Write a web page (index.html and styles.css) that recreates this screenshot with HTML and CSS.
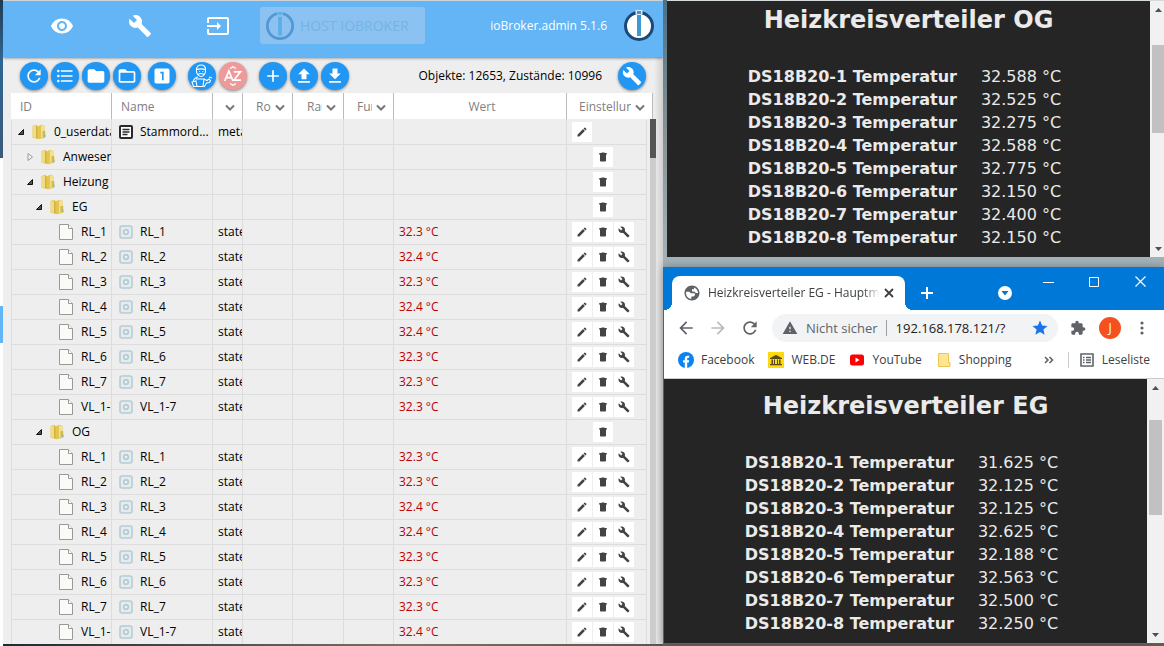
FILE: index.html
```html
<!DOCTYPE html>
<html lang="de">
<head>
<meta charset="utf-8">
<title>ioBroker.admin</title>
<link rel="stylesheet" href="styles.css">
</head>
<body>
<svg class="defs" aria-hidden="true">
  <symbol id="i-eye" viewBox="0 0 24 24"><path d="M12 4.5C7 4.5 2.73 7.61 1 12c1.73 4.39 6 7.5 11 7.5s9.27-3.11 11-7.5c-1.73-4.39-6-7.5-11-7.5zM12 17c-2.76 0-5-2.24-5-5s2.24-5 5-5 5 2.24 5 5-2.24 5-5 5zm0-8c-1.66 0-3 1.34-3 3s1.34 3 3 3 3-1.34 3-3-1.34-3-3-3z"/></symbol>
  <symbol id="i-wrench" viewBox="0 0 24 24"><path d="M22.7 19l-9.1-9.1c.9-2.3.4-5-1.5-6.9-2-2-5-2.4-7.4-1.3L9 6 6 9 1.6 4.7C.4 7.1.9 10.1 2.9 12.1c1.9 1.9 4.6 2.4 6.9 1.5l9.1 9.1c.4.4 1 .4 1.4 0l2.3-2.3c.5-.4.5-1.1.1-1.4z"/></symbol>
  <symbol id="i-input" viewBox="0 0 24 24"><path d="M21 3.01H3c-1.1 0-2 .9-2 2V9h2V4.99h18v14.03H3V15H1v4.01c0 1.1.9 1.98 2 1.98h18c1.1 0 2-.88 2-1.98v-14c0-1.11-.9-2-2-2zM11 16l4-4-4-4v3H1v2h10v3z"/></symbol>
  <symbol id="i-refresh" viewBox="0 0 24 24"><path d="M17.65 6.35C16.2 4.9 14.21 4 12 4c-4.42 0-7.99 3.58-7.99 8s3.57 8 7.99 8c3.73 0 6.84-2.55 7.73-6h-2.08c-.82 2.33-3.04 4-5.65 4-3.31 0-6-2.69-6-6s2.69-6 6-6c1.66 0 3.14.69 4.22 1.78L13 11h7V4l-2.35 2.35z"/></symbol>
  <symbol id="i-list" viewBox="0 0 24 24"><circle cx="4" cy="6" r="1.5"/><circle cx="4" cy="12" r="1.5"/><circle cx="4" cy="18" r="1.5"/><path d="M7 5h14v2H7zM7 11h14v2H7zM7 17h14v2H7z"/></symbol>
  <symbol id="i-folder" viewBox="0 0 24 24"><path d="M10 4H4c-1.1 0-1.99.9-1.99 2L2 18c0 1.1.9 2 2 2h16c1.1 0 2-.9 2-2V8c0-1.1-.9-2-2-2h-8l-2-2z"/></symbol>
  <symbol id="i-folder-open" viewBox="0 0 24 24"><path d="M20 6h-8l-2-2H4c-1.1 0-1.99.9-1.99 2L2 18c0 1.1.9 2 2 2h16c1.1 0 2-.9 2-2V8c0-1.1-.9-2-2-2zm0 12H4V8h16v10z"/></symbol>
  <symbol id="i-one" viewBox="0 0 24 24"><path d="M19 3H5c-1.1 0-2 .9-2 2v14c0 1.1.9 2 2 2h14c1.1 0 2-.9 2-2V5c0-1.1-.9-2-2-2zm-5 14h-2V9h-2V7h4v10z"/></symbol>
  <symbol id="i-expert" viewBox="0 0 24 24"><g fill="none" stroke="#fff" stroke-width="1.1"><path d="M6.500 5.500c0-3 2-4.500 4.500-4.500s4.500 1.500 4.500 4.500c-3-.8-6-.8-9 0zM6.500 5.500c-.5 3.500 1.500 7 4.500 7s5-3.500 4.500-7M8 10.500c2-1.300 4-1.300 6 0M9 7.500h.8M12.500 7.500h.8"/><path d="M8 13c-3 .8-4.500 2-5 5M2 18l4-1 1 5.500H3.500zM6 15h8l-1 7.500H7.500M14 15l3 1.500 2-1.500 1.500 1.500-1 2-3 .5-2.500 4M19 13l3 1"/></g></symbol>
  <symbol id="i-sort" viewBox="0 0 24 24"><g fill="none" stroke="#fff" stroke-width="2"><path d="M2 18L7 6l5 12M4 14h6M13 7h8l-8 10h8.500"/><path stroke-width="1.500" d="M8.500 3L12 .8 15.500 3M8.500 21l3.500 2.200 3.500-2.200"/></g></symbol>
  <symbol id="i-plus" viewBox="0 0 24 24"><path d="M19 13h-6v6h-2v-6H5v-2h6V5h2v6h6v2z"/></symbol>
  <symbol id="i-up" viewBox="0 0 24 24"><path d="M9 16h6v-6h4l-7-7-7 7h4zm-4 2h14v2H5z"/></symbol>
  <symbol id="i-down" viewBox="0 0 24 24"><path d="M19 9h-4V3H9v6H5l7 7 7-7zM5 18v2h14v-2H5z"/></symbol>
  <symbol id="i-edit" viewBox="0 0 24 24"><path d="M3 17.250V21h3.750L17.810 9.940l-3.750-3.750L3 17.250zM20.710 7.040c.39-.39.39-1.020 0-1.410l-2.340-2.340c-.39-.39-1.020-.39-1.410 0l-1.830 1.830 3.750 3.750 1.830-1.830z"/></symbol>
  <symbol id="i-trash" viewBox="0 0 24 24"><path d="M6 19c0 1.1.9 2 2 2h8c1.1 0 2-.9 2-2V7H6v12zM19 4h-3.500l-1-1h-5l-1 1H5v2h14V4z"/><path d="M5 4h14v4H5z"/></symbol>
  <symbol id="i-chevron" viewBox="0 0 10 7"><path d="M1 1.500l4 4 4-4" fill="none" stroke="#777" stroke-width="2"/></symbol>
  <symbol id="i-open" viewBox="0 0 8 8"><path d="M6.500 1.500v5h-5z" fill="#555" stroke="#111"/></symbol>
  <symbol id="i-closed" viewBox="0 0 8 8"><path d="M2 0.500L6.500 4 2 7.500z" fill="#f6f6f6" stroke="#999"/></symbol>
  <symbol id="i-yfolder" viewBox="0 0 14 16"><path d="M.5 2L4 .8 6 2.200 9 .8l3.500 1v5l.8.5v6.500l-3.300.7-3 .8-6.500-1.500z" fill="#e6c955"/><path d="M.8 2.500L4 1.500V14l-3.200-.8z" fill="#f0dc82"/><path d="M4 1.500L5.500 3v11.500L4 14z" fill="#d4b040"/><path d="M6 3l3-1.800v12L6 15z" fill="#e3c554"/><path d="M9 1.500h3v12H9z" fill="#f3e18d"/><path d="M10.500 7h2.500v6.500h-2.500z" fill="#dcb841"/><path d="M12.300 10.500h1.200v2.500h-1.200z" fill="#62c6df"/></symbol>
  <symbol id="i-file" viewBox="0 0 14 16"><path d="M.5.5h9l4 4v11H.5z" fill="#fafaf6" stroke="#999"/><path d="M9.500.5v4h4" fill="#fff" stroke="#999"/></symbol>
  <symbol id="i-meta" viewBox="0 0 14 14"><rect x="1" y="1" width="12" height="12" rx="1" fill="#fff" stroke="#2a2a2a" stroke-width="2"/><path d="M3.500 4.500h7M3.500 7h7M3.500 9.500h5" stroke="#2a2a2a" stroke-width="1.400"/></symbol>
  <symbol id="i-state" viewBox="0 0 14 14"><rect x="1" y="1" width="12" height="12" rx="2" fill="#e2ebee" stroke="#b8ccd3" stroke-width="1.600"/><circle cx="7" cy="7" r="2.300" fill="#e8f0f2" stroke="#b0c6ce" stroke-width="1.500"/></symbol>
  <symbol id="i-logo" viewBox="0 0 32 32"><circle cx="16" cy="16" r="13.500" fill="#fff" stroke="#1b4877" stroke-width="3"/><path d="M12.500 0h7v4h-7z" fill="#d6ecf8"/><path d="M14 5h4v21h-4zM14 1h4v3h-4z" fill="#3b9bd0"/></symbol>
  <symbol id="i-logo-dim" viewBox="0 0 32 32"><circle cx="16" cy="16" r="13.500" fill="none" stroke="#5398d4" stroke-width="3"/><path d="M13 1h6v3h-6z" fill="#8bc2f1"/><path d="M14 6h4v20h-4zM14 1h4v3h-4z" fill="#5daee6"/></symbol>
  <symbol id="i-back" viewBox="0 0 24 24"><path d="M20 11H7.830l5.590-5.590L12 4l-8 8 8 8 1.410-1.410L7.830 13H20v-2z"/></symbol>
  <symbol id="i-forward" viewBox="0 0 24 24"><path d="M4 11h12.170l-5.590-5.590L12 4l8 8-8 8-1.410-1.410L16.170 13H4v-2z"/></symbol>
  <symbol id="i-warning" viewBox="0 0 24 24"><path d="M1 21h22L12 2 1 21zm12-3h-2v-2h2v2zm0-4h-2v-4h2v4z"/></symbol>
  <symbol id="i-globe" viewBox="0 0 24 24"><path d="M12 2C6.480 2 2 6.480 2 12s4.480 10 10 10 10-4.480 10-10S17.520 2 12 2zm-1 17.930c-3.950-.49-7-3.850-7-7.930 0-.62.08-1.210.21-1.790H8.500l2 2h4c1 0 1.500.8 1.500 1.700 0 1-.8 1.800-1.500 2.300L11 17v2.930zM20 12h-3l-2-2h-3V7h2.500L15 4.590c2.930 1.190 5 4.060 5 7.410z"/></symbol>
  <symbol id="i-star" viewBox="0 0 24 24"><path d="M12 17.270L18.180 21l-1.640-7.030L22 9.240l-7.190-.61L12 2 9.190 8.630 2 9.240l5.460 4.730L5.820 21z"/></symbol>
  <symbol id="i-puzzle" viewBox="0 0 24 24"><path d="M20.500 11H19V7c0-1.100-.9-2-2-2h-4V3.500C13 2.120 11.880 1 10.500 1S8 2.120 8 3.500V5H4c-1.100 0-1.990.9-1.990 2v3.800H3.500c1.490 0 2.700 1.210 2.700 2.700s-1.210 2.700-2.700 2.700H2V20c0 1.100.9 2 2 2h3.800v-1.500c0-1.490 1.210-2.700 2.700-2.700 1.490 0 2.700 1.210 2.700 2.700V22H17c1.100 0 2-.9 2-2v-4h1.500c1.380 0 2.500-1.120 2.500-2.500S21.880 11 20.500 11z"/></symbol>
  <symbol id="i-arrow-up" viewBox="0 0 7 4"><path d="M0 4l3.500-4L7 4z"/></symbol>
  <symbol id="i-arrow-down" viewBox="0 0 7 4"><path d="M0 0l3.500 4L7 0z"/></symbol>
</svg>
<div class="desktop">
  <div class="behind"><span class="behind-mark"></span></div>

  <main class="admin">
    <header class="appbar">
      <nav class="appbar-nav">
        <button class="nav-btn" aria-label="Ansicht"><svg class="ic24"><use href="#i-eye"/></svg></button>
        <button class="nav-btn" aria-label="Einstellungen"><svg class="ic24"><use href="#i-wrench"/></svg></button>
        <button class="nav-btn" aria-label="Anmelden"><svg class="ic24"><use href="#i-input"/></svg></button>
      </nav>
      <button class="host" disabled><svg class="ic30"><use href="#i-logo-dim"/></svg>HOST IOBROKER</button>
      <span class="version">ioBroker.admin 5.1.6</span>
      <svg class="ic32"><use href="#i-logo"/></svg>
    </header>
    <div class="toolbar">
      <div class="group">
        <button class="fab" aria-label="Aktualisieren"><svg class="ic20"><use href="#i-refresh"/></svg></button>
        <button class="fab" aria-label="Liste"><svg class="ic20"><use href="#i-list"/></svg></button>
        <button class="fab" aria-label="Alle schließen"><svg class="ic20"><use href="#i-folder"/></svg></button>
        <button class="fab" aria-label="Alle öffnen"><svg class="ic20"><use href="#i-folder-open"/></svg></button>
      </div>
      <button class="fab one" aria-label="Eine Ebene"><svg class="ic20"><use href="#i-one"/></svg></button>
      <div class="group">
        <button class="fab" aria-label="Expertenmodus"><svg class="ic24"><use href="#i-expert"/></svg></button>
        <button class="fab fab-red" aria-label="Sortieren"><svg class="ic20"><use href="#i-sort"/></svg></button>
      </div>
      <div class="group">
        <button class="fab" aria-label="Hinzufügen"><svg class="ic20"><use href="#i-plus"/></svg></button>
        <button class="fab" aria-label="Hochladen"><svg class="ic20"><use href="#i-up"/></svg></button>
        <button class="fab" aria-label="Herunterladen"><svg class="ic20"><use href="#i-down"/></svg></button>
      </div>
      <span class="count">Objekte: 12653, Zustände: 10996</span>
      <button class="fab" aria-label="Spalten"><svg class="ic20"><use href="#i-wrench"/></svg></button>
    </div>
    <div class="tree">
      <table class="objects">
        <colgroup><col class="c-id"><col class="c-name"><col class="c-type"><col class="c-role"><col class="c-room"><col class="c-func"><col><col class="c-set"><col class="c-end"></colgroup>
        <thead>
          <tr>
            <th class="first">ID</th>
            <th>Name</th>
            <th><label class="filter"><select class="w-none" aria-label="Typ"><option></option></select><svg class="chev"><use href="#i-chevron"/></svg></label></th>
            <th><label class="filter"><select class="w-two" aria-label="Rolle"><option>Rolle</option></select><svg class="chev"><use href="#i-chevron"/></svg></label></th>
            <th><label class="filter"><select class="w-two" aria-label="Raum"><option>Raum</option></select><svg class="chev"><use href="#i-chevron"/></svg></label></th>
            <th><label class="filter"><select class="w-two" aria-label="Funktionen"><option>Funktionen</option></select><svg class="chev"><use href="#i-chevron"/></svg></label></th>
            <th class="center">Wert</th>
            <th colspan="2"><label class="filter"><select class="w-long" aria-label="Einstellungen"><option>Einstellungen</option></select><svg class="chev"><use href="#i-chevron"/></svg></label></th>
          </tr>
        </thead>
        <tbody id="rows"></tbody>
      </table>
      <div class="tree-scroll"><span class="tree-thumb"></span></div>
    </div>
  </main>

  <div class="right">
    <section class="sensor-window">
      <div class="sensors">
        <h1>Heizkreisverteiler OG</h1>
        <table class="temps">
          <tr><th>DS18B20-1 Temperatur</th><td>32.588 °C</td></tr>
          <tr><th>DS18B20-2 Temperatur</th><td>32.525 °C</td></tr>
          <tr><th>DS18B20-3 Temperatur</th><td>32.275 °C</td></tr>
          <tr><th>DS18B20-4 Temperatur</th><td>32.588 °C</td></tr>
          <tr><th>DS18B20-5 Temperatur</th><td>32.775 °C</td></tr>
          <tr><th>DS18B20-6 Temperatur</th><td>32.150 °C</td></tr>
          <tr><th>DS18B20-7 Temperatur</th><td>32.400 °C</td></tr>
          <tr><th>DS18B20-8 Temperatur</th><td>32.150 °C</td></tr>
        </table>
      </div>
      <div class="scroll scroll-og"><svg class="arrow"><use href="#i-arrow-up"/></svg><span class="thumb"></span><svg class="arrow"><use href="#i-arrow-down"/></svg></div>
    </section>

    <section class="browser">
      <div class="tabstrip">
        <div class="tab">
          <svg class="ic18 grey"><use href="#i-globe"/></svg>
          <span class="tab-title">Heizkreisverteiler EG - Hauptmenü</span>
          <button class="plain" aria-label="Tab schließen"><svg class="ic10" viewBox="0 0 10 10"><path d="M1 1l8 8M9 1L1 9" stroke="#3c4043" stroke-width="1.800"/></svg></button>
        </div>
        <button class="plain new-tab" aria-label="Neuer Tab"><svg class="ic12" viewBox="0 0 12 12"><path d="M6 0v12M0 6h12" stroke="#fff" stroke-width="2"/></svg></button>
        <button class="plain search-tabs" aria-label="Tabs suchen"><svg class="ic14" viewBox="0 0 14 14"><circle cx="7" cy="7" r="7" fill="#fff"/><path d="M3.500 5h7L7 9.500z" fill="#0078d7"/></svg></button>
        <div class="win-btns">
          <button class="plain" aria-label="Minimieren"><svg class="ic11" viewBox="0 0 11 11"><path d="M0 6.500h11" stroke="#fff"/></svg></button>
          <button class="plain" aria-label="Maximieren"><svg class="ic11" viewBox="0 0 11 11"><path d="M.5 1.500h9v9h-9z" fill="none" stroke="#fff"/></svg></button>
          <button class="plain" aria-label="Schließen"><svg class="ic11" viewBox="0 0 11 11"><path d="M.5.5l10 10M10.500.5l-10 10" stroke="#fff" stroke-width="1.200"/></svg></button>
        </div>
      </div>
      <div class="navbar">
        <button class="plain grey" aria-label="Zurück"><svg class="ic20"><use href="#i-back"/></svg></button>
        <button class="plain light" aria-label="Vorwärts" disabled><svg class="ic20"><use href="#i-forward"/></svg></button>
        <button class="plain grey" aria-label="Neu laden"><svg class="ic20"><use href="#i-refresh"/></svg></button>
        <div class="omnibox">
          <svg class="ic16 grey"><use href="#i-warning"/></svg>
          <span class="insecure">Nicht sicher</span>
          <input class="url" aria-label="Adresse" value="192.168.178.121/?">
          <button class="plain blue" aria-label="Lesezeichen"><svg class="ic18"><use href="#i-star"/></svg></button>
        </div>
        <button class="plain grey" aria-label="Erweiterungen"><svg class="ic16"><use href="#i-puzzle"/></svg></button>
        <button class="plain avatar">J</button>
        <button class="plain grey" aria-label="Menü"><svg class="dots" viewBox="0 0 4 14"><circle cx="2" cy="2" r="1.600"/><circle cx="2" cy="7" r="1.600"/><circle cx="2" cy="12" r="1.600"/></svg></button>
      </div>
      <div class="bookmarks">
        <a href="#" class="bm"><svg class="ic16" viewBox="0 0 16 16"><circle cx="8" cy="8" r="8" fill="#0a84f0"/><path d="M6.800 16v-5.500H5V8.200h1.800V6.700c0-2 1-3 2.900-3l1.500.1v2h-1c-.8 0-1 .4-1 1.100v1.300h2l-.4 2.300H9.200V16z" fill="#fff"/></svg>Facebook</a>
        <a href="#" class="bm"><svg class="ic16" viewBox="0 0 16 16"><path d="M0 0h16v16H0z" fill="#ffd90f"/><path d="M2 6c2-.5 3-2 6-3 3 1 4 2.500 6 3v1H2zM3.500 7.500H5V12H3.500zM6 7.500h1V12H6zM9 7.500h1V12H9zM11 7.500h1.500V12H11zM2 12h12v1.300H2z" fill="#5a4b1a"/></svg>WEB.DE</a>
        <a href="#" class="bm"><svg class="ic16" viewBox="0 0 16 16"><rect x="1" y="2.500" width="14" height="11" rx="2.500" fill="#f00"/><path d="M6.500 5.500v5l4-2.500z" fill="#fff"/></svg>YouTube</a>
        <a href="#" class="bm"><svg class="ic16" viewBox="0 0 16 16"><path d="M2.500 1.500h10v9h1.500v4H2.500z" fill="#ffe694" stroke="#edc653"/></svg>Shopping</a>
        <button class="plain more" aria-label="Weitere"><svg class="ic10" viewBox="0 0 10 10"><path d="M1 2L4 5 1 8M5.500 2l3 3-3 3" fill="none" stroke="#5f6368" stroke-width="1.600"/></svg></button>
        <button class="plain reading"><svg class="ic14" viewBox="0 0 14 14"><path d="M1 1h12v12H1z" fill="#fff" stroke="#5f6368" stroke-width="1.600"/><path d="M3 4.500h1.500M6 4.500h5M3 7h1.500M6 7h5M3 9.500h1.500M6 9.500h5" stroke="#5f6368" stroke-width="1.400"/></svg>Leseliste</button>
      </div>
      <div class="page">
        <div class="sensors">
          <h1>Heizkreisverteiler EG</h1>
          <table class="temps">
            <tr><th>DS18B20-1 Temperatur</th><td>31.625 °C</td></tr>
            <tr><th>DS18B20-2 Temperatur</th><td>32.125 °C</td></tr>
            <tr><th>DS18B20-3 Temperatur</th><td>32.125 °C</td></tr>
            <tr><th>DS18B20-4 Temperatur</th><td>32.625 °C</td></tr>
            <tr><th>DS18B20-5 Temperatur</th><td>32.188 °C</td></tr>
            <tr><th>DS18B20-6 Temperatur</th><td>32.563 °C</td></tr>
            <tr><th>DS18B20-7 Temperatur</th><td>32.500 °C</td></tr>
            <tr><th>DS18B20-8 Temperatur</th><td>32.250 °C</td></tr>
          </table>
        </div>
        <div class="scroll scroll-eg"><svg class="arrow"><use href="#i-arrow-up"/></svg><span class="thumb"></span><svg class="arrow"><use href="#i-arrow-down"/></svg></div>
      </div>
    </section>
  </div>
</div>
<script src="rows.js"></script>
</body>
</html>
```

FILE: styles.css
```css
* { box-sizing: border-box; }
body { margin: 0; font: 12px/16px "Open Sans", "Noto Sans", sans-serif; color: #000; }
button, select, input { font: inherit; color: inherit; border: 0; padding: 0; margin: 0; background: none; }
svg { display: block; fill: currentColor; flex: none; }
.defs { position: absolute; width: 0; height: 0; }
.ic10 { width: 10px; height: 10px; }
.ic11 { width: 11px; height: 11px; }
.ic12 { width: 12px; height: 12px; }
.ic14 { width: 14px; height: 14px; }
.ic16 { width: 16px; height: 16px; }
.ic18 { width: 18px; height: 18px; }
.ic20 { width: 20px; height: 20px; }
.ic24 { width: 24px; height: 24px; }
.ic30 { width: 30px; height: 30px; }
.ic32 { width: 32px; height: 32px; }
.grey { color: #5f6368; }
.light { color: #b9bbbe; }
.blue { color: #1a73e8; }

.desktop {
  display: grid;
  grid-template-columns: 3px 660fr 501fr;
  height: 100vh;
  overflow: hidden;
  background: linear-gradient(90deg, #1c2a33, #7b7263 35%, #55524c 60%, #8d8a80);
}
.behind { background: linear-gradient(#1f3d55, #2f6594 60px, #3c5a78 158px, #fff 158px); padding-top: 306px; }
.behind-mark { display: block; height: 37px; background: #64b5f6; }

/* object browser */
.admin {
  display: flex;
  flex-direction: column;
  min-width: 0;
  overflow: hidden;
  margin-bottom: 2px;
  border-top: 1px solid #cfd4d8;
  background: linear-gradient(270deg, #cfcfcf, #eee 9px);
}
.appbar {
  display: flex;
  align-items: center;
  padding: 6px 8px 13px 47px;
  background: #64b5f6;
  color: #fff;
  box-shadow: 0 1px 3px rgba(0, 0, 0, .5);
}
.appbar-nav { display: flex; gap: 54px; }
.nav-btn { color: #fff; }
.host {
  display: flex;
  align-items: center;
  gap: 5px;
  height: 37px;
  margin-left: 30px;
  padding: 0 16px 0 5px;
  border-radius: 3px;
  background: #8bc2f1;
  color: #77b3e6;
  font-size: 14px;
}
.version { margin-left: auto; padding-right: 16px; white-space: nowrap; }
.toolbar { display: flex; align-items: center; gap: 12px; padding: 5px 17px 3px; }
.group { display: flex; gap: 3px; }
.fab {
  display: grid;
  place-items: center;
  flex: none;
  width: 28px;
  height: 28px;
  border-radius: 50%;
  background: #2196f3;
  color: #fff;
  box-shadow: 0 1px 3px rgba(0, 0, 0, .45);
}
.fab-red { background: #ef9a9a; }
.one { margin-left: -5px; }
.count { margin-left: auto; white-space: nowrap; padding-right: 4px; }

.tree { position: relative; margin: 0 7px 0 8px; padding-right: 3px; }
.objects { width: 100%; table-layout: fixed; border-spacing: 0; }
.c-id { width: 101px; }
.c-name { width: 101px; }
.c-type { width: 30px; }
.c-role { width: 50px; }
.c-room { width: 51px; }
.c-func { width: 50px; }
.c-set { width: 80px; }
.c-end { width: 6px; }
.objects th {
  height: 27px;
  padding: 2px 0 0 9px;
  background: #fff;
  border-right: 1px solid #bbb;
  border-bottom: 1px solid #eee;
  color: #808080;
  font-weight: 400;
  text-align: left;
}
.objects th.center { text-align: center; padding-right: 5px; }
.filter { display: flex; align-items: center; justify-content: flex-end; gap: 4px; padding-right: 7px; }
.filter select { appearance: none; overflow: hidden; height: 18px; }
.w-none { width: 0; }
.w-two { width: 15px; }
.w-long { width: 52px; }
.chev { width: 10px; height: 7px; }
.objects td {
  height: 25px;
  padding: 0 0 0 5px;
  overflow: hidden;
  white-space: nowrap;
  border-right: 1px solid #ddd;
  border-bottom: 1px solid #ddd;
}
.objects td.id { border-left: 1px solid #ddd; }
.objects td.end { border: 0; }
.node { display: flex; align-items: center; }
.indent { width: 9px; flex: none; }
.twist { width: 8px; height: 8px; margin-right: 7px; flex: none; }
.node-icon { width: 14px; height: 16px; margin-right: 8px; }
.named { display: flex; align-items: center; gap: 7px; padding-left: 2px; }
.objects td.val { color: #b80000; }
.acts { display: grid; grid-template-columns: repeat(3, 20px); gap: 1px; }
.act { display: grid; place-items: center; height: 20px; background: #fff; color: #444; }
.act svg { width: 12px; height: 12px; }
.act-edit { grid-column: 1; }
.act-del { grid-column: 2; }
.act-set { grid-column: 3; }
.tree-scroll { position: absolute; top: 26px; bottom: 0; right: 0; width: 6px; background: #ccc; }
.tree-thumb { display: block; height: 39px; background: #555; }

/* right side */
.right { display: flex; flex-direction: column; gap: 10px; min-width: 0; background: linear-gradient(#4d7186, #8b9595 140px, #a3b1b8 257px, #a3b1b8 600px, #6b675e 640px); }
.sensor-window { display: flex; margin-left: 4px; border-top: 1px solid #d5dadd; }
.sensors { flex: 1; background: #252525; color: #eaeaea; font: 16px/23px "DejaVu Sans", Verdana, sans-serif; }
.sensors h1 { margin: 0; padding: 4px 0 30px; font-size: 24px; line-height: 30px; text-align: center; }
.page h1 { padding-top: 12px; }
.temps { border-spacing: 0; margin: 0 auto 8px; white-space: nowrap; }
.temps th { padding: 0 12px 0 0; text-align: left; }
.temps td { padding: 0 8px 0 12px; }
.scroll { display: flex; flex-direction: column; align-items: center; width: 17px; background: #f1f1f1; color: #505050; }
.scroll-og { width: 14px; padding: 7px 0 6px 2px; }
.arrow { width: 7px; height: 4px; }
.thumb { width: 100%; background: #c1c1c1; }
.scroll-og .thumb { height: 88px; margin: 33px 0 auto; }
.scroll-eg { padding: 7px 2px 6px; }
.scroll-eg .thumb { height: 95px; margin: 30px 0 auto; }

.browser { display: flex; flex-direction: column; border-left: 1px solid #0078d7; border-bottom: 1px solid #0078d7; background: #fff; color: #3c4043; box-shadow: 0 0 8px rgba(0, 0, 0, .3); }
.plain { display: grid; place-items: center; flex: none; }
.tabstrip { display: flex; align-items: flex-start; height: 43px; padding: 9px 18px 0 8px; background: #0078d7; }
.tab { position: relative; display: flex; align-items: center; width: 233px; height: 34px; padding: 0 11px; border-radius: 8px 8px 0 0; background: #fff; }
.tab::before, .tab::after { content: ""; position: absolute; bottom: 0; width: 8px; height: 8px; }
.tab::before { left: -8px; background: radial-gradient(circle at 0 0, #0078d7 8px, #fff 8px); }
.tab::after { right: -8px; background: radial-gradient(circle at 100% 0, #0078d7 8px, #fff 8px); }
.tab-title { flex: 1; overflow: hidden; margin: 0 4px 0 7px; white-space: nowrap; mask-image: linear-gradient(90deg, #000 90%, transparent); }
.new-tab { height: 34px; margin-left: 16px; }
.search-tabs { height: 34px; margin-left: 65px; }
.win-btns { display: flex; gap: 35px; margin-left: auto; }
.navbar { display: flex; align-items: center; height: 36px; padding: 0 20px 0 12px; gap: 12px; }
.omnibox { display: flex; align-items: center; flex: 1; min-width: 0; height: 28px; padding: 0 9px 0 10px; border-radius: 14px; background: #f1f3f4; font-size: 13px; }
.insecure { margin: 0 9px 0 8px; padding-right: 8px; border-right: 1px solid #9aa0a6; color: #5f6368; white-space: nowrap; }
.url { flex: 1; min-width: 0; color: #202124; }
.avatar { width: 22px; height: 22px; border-radius: 50%; background: #f4511e; color: #fff; }
.navbar .avatar { margin: 0 7px 0 1px; }
.dots { width: 4px; height: 14px; }
.bookmarks { display: flex; align-items: center; gap: 14px; height: 33px; padding: 0 14px 4px; border-bottom: 1px solid #ccc; white-space: nowrap; }
.bm { display: flex; align-items: center; gap: 7px; color: inherit; text-decoration: none; }
.more { margin-left: auto; }
.reading { display: flex; align-items: center; gap: 8px; padding-left: 11px; border-left: 1px solid #ccc; }
.page { display: flex; }
```

FILE: rows.js
```js
const leaves = (values) => values.map((v, i) => ({
  level: 3, icon: 'file', id: i === 7 ? 'VL_1-7' : 'RL_' + (i + 1),
  name: i === 7 ? 'VL_1-7' : 'RL_' + (i + 1), type: 'state', value: v + ' °C', acts: ['edit', 'del', 'set']
}));
const rows = [
  { level: 0, twist: 'open', icon: 'yfolder', id: '0_userdata.0', name: 'Stammord...', type: 'meta', acts: ['edit'] },
  { level: 1, twist: 'closed', icon: 'yfolder', id: 'Anwesenheit', acts: ['del'] },
  { level: 1, twist: 'open', icon: 'yfolder', id: 'Heizung', acts: ['del'] },
  { level: 2, twist: 'open', icon: 'yfolder', id: 'EG', acts: ['del'] },
  ...leaves(['32.3', '32.4', '32.3', '32.4', '32.4', '32.3', '32.3', '32.3']),
  { level: 2, twist: 'open', icon: 'yfolder', id: 'OG', acts: ['del'] },
  ...leaves(['32.3', '32.3', '32.4', '32.4', '32.3', '32.3', '32.3', '32.4'])
];
const actions = {
  edit: ['edit', 'Bearbeiten'],
  del: ['trash', 'Löschen'],
  set: ['wrench', 'Konfigurieren']
};
const icon = (name, cls) => `<svg class="${cls}"><use href="#i-${name}"/></svg>`;
document.getElementById('rows').innerHTML = rows.map((r) => `<tr>
  <td class="id"><div class="node">${'<span class="indent"></span>'.repeat(r.level)}${r.twist ? icon(r.twist, 'twist') : '<span class="twist"></span>'}${icon(r.icon, 'node-icon')}${r.id}</div></td>
  <td>${r.name ? `<div class="named">${icon(r.type, 'ic14')}${r.name}</div>` : ''}</td>
  <td>${r.type || ''}</td><td></td><td></td><td></td>
  <td class="val">${r.value || ''}</td>
  <td><div class="acts">${r.acts.map((a) => `<button class="act act-${a}" aria-label="${actions[a][1]}">${icon(actions[a][0], '')}</button>`).join('')}</div></td>
  <td class="end"></td></tr>`).join('');
```
